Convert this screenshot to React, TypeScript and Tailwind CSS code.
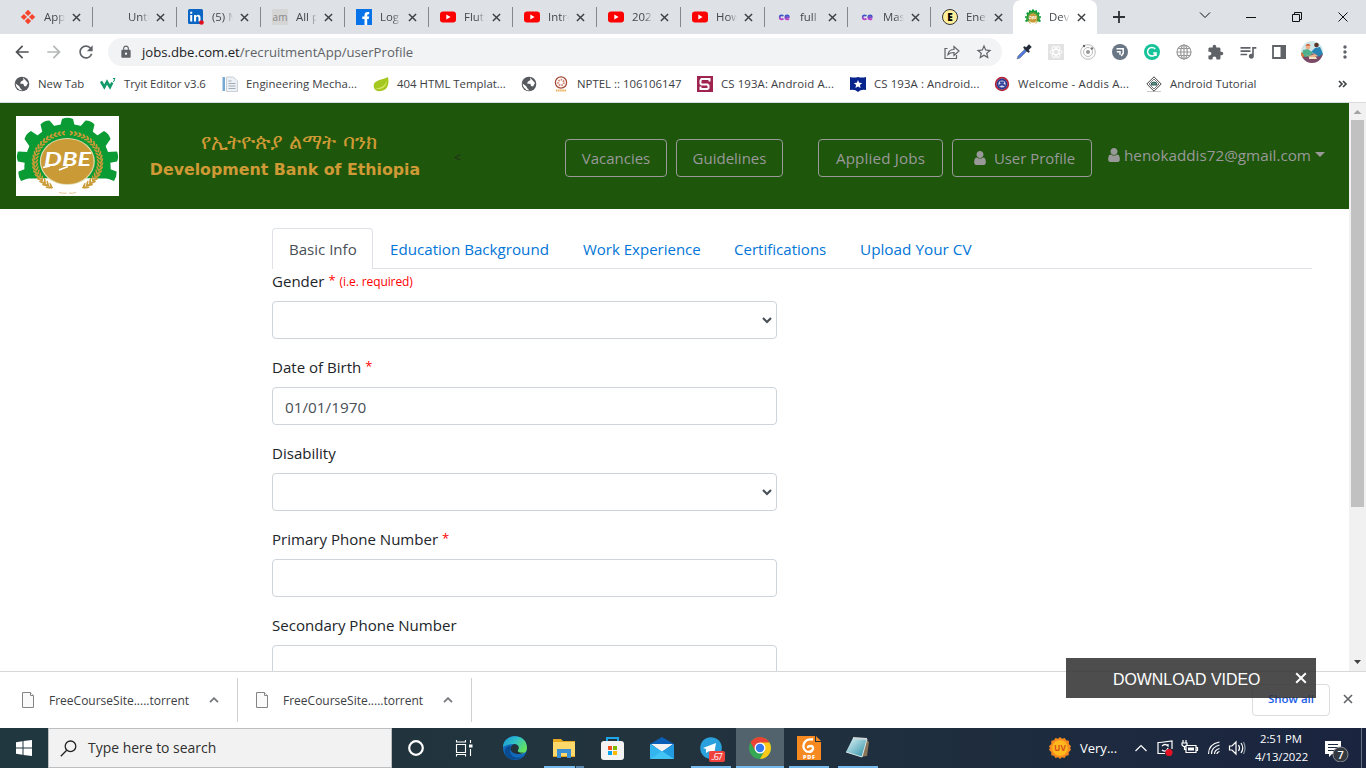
import type { ReactNode } from "react";
import {
  MdArrowBack,
  MdArrowForward,
  MdRefresh,
  MdLock,
  MdStarOutline,
  MdExtension,
  MdQueueMusic,
  MdMoreVert,
} from "react-icons/md";

const LEAVES = Array.from({ length: 20 }, (_, i) => 97 + i * 7.4);

function GearLogo({ className }: { className: string }) {
  return (
    <svg viewBox="0 0 103 80" preserveAspectRatio="none" className={className}>
      <rect width="103" height="80" fill="#fff" />
      <g fill="#0a9b35">
        <path d="M9 62.500C4 28 26 8 51.500 8S99 28 94 62.500Z" />
        <path d="M44 11 46 3Q51.500 .3 57 3L59 11ZM27 19 24.500 8.500Q28 4.500 33.500 4.500L40 12ZM76 19 78.500 8.500Q75 4.500 69.500 4.500L63 12ZM14 31 8.500 23Q10 17.500 15 15L24 21ZM89 31 94.500 23Q93 17.500 88 15L79 21ZM10 47 2 45.500Q-.3 41 2 35.500L12 36ZM93 47 101 45.500Q103.300 41 101 35.500L91 36ZM13 62 5 65Q2 61 2.500 55.500L12 52ZM90 62 98 65Q101 61 100.500 55.500L91 52Z" />
      </g>
      <path d="M20 62.500H83L74 75 51 79 29 75Z" fill="#fff" />
      <g fill="#c99a35">
        {LEAVES.map((deg, i) => {
          const a = (deg * Math.PI) / 180;
          const x = 34 * Math.cos(a);
          const y = 30 * Math.sin(a);
          const size = 2.1 + i * 0.09;
          return (
            <g key={deg}>
              <ellipse cx={51.5 + x} cy={46 - y} rx="1.050" ry={size} transform={`rotate(${150 - deg} ${51.5 + x} ${46 - y})`} />
              <ellipse cx={51.5 + x * 0.91} cy={46 - y * 0.93} rx="0.900" ry={size * 0.8} transform={`rotate(${215 - deg} ${51.5 + x * 0.91} ${46 - y * 0.93})`} />
              <ellipse cx={51.5 - x} cy={46 - y} rx="1.050" ry={size} transform={`rotate(${deg - 150} ${51.5 - x} ${46 - y})`} />
              <ellipse cx={51.5 - x * 0.91} cy={46 - y * 0.93} rx="0.900" ry={size * 0.8} transform={`rotate(${deg - 215} ${51.5 - x * 0.91} ${46 - y * 0.93})`} />
            </g>
          );
        })}
      </g>
      <path d="M43 76.500Q47 77.500 50.500 77.200M53 77.200Q57 77.500 60 76.500" stroke="#d9b877" strokeWidth=".8" fill="none" />
      <ellipse cx="51.300" cy="45.500" rx="27.500" ry="23.600" fill="#e3dcb0" />
      <ellipse cx="51.300" cy="45.500" rx="26.300" ry="22.600" fill="#c99a35" />
      <g fontFamily="Lato, sans-serif" fontStyle="italic" fontWeight="700" fill="#fff">
        <text x="28" y="50" fontSize="19" textLength="47" lengthAdjust="spacingAndGlyphs">DBE</text>
      </g>
      <path d="M27 51.500 34 49.800M43 54 52 50.500" stroke="#fff" strokeWidth="1.800" />
    </svg>
  );
}

function Person({ className }: { className: string }) {
  return (
    <svg viewBox="128 128 1536 1536" className={className} fill="currentColor">
      <path d="M1536 1399q0 109-62.500 187t-150.500 78h-854q-88 0-150.500-78t-62.500-187q0-85 8.500-160.500t31.500-152 58.500-131 94-89 134.500-34.500q131 128 313 128t313-128q76 0 134.500 34.500t94 89 58.500 131 31.500 152 8.500 160.500zm-256-887q0 159-112.500 271.500t-271.500 112.500-271.500-112.500-112.500-271.500 112.500-271.500 271.500-112.500 271.500 112.500 112.500 271.500z" />
    </svg>
  );
}

const Cross = ({ className }: { className: string }) => (
  <svg viewBox="0 0 10 10" className={className} fill="none" stroke="currentColor" strokeWidth="1.600">
    <path d="M1 1l8 8M9 1 1 9" />
  </svg>
);

const YouTube = () => (
  <svg viewBox="0 0 16 16" className="size-4">
    <rect y="2.500" width="16" height="11" rx="3" fill="#f00" />
    <path d="M6.300 5.600v4.800L10.600 8z" fill="#fff" />
  </svg>
);
const CodeCloud = () => (
  <svg viewBox="0 0 16 16" className="size-4" fill="none" strokeWidth="1.700">
    <defs>
      <linearGradient id="cc" x1="0" y1="0" x2="0" y2="1">
        <stop offset="0" stopColor="#3156c8" />
        <stop offset="1" stopColor="#c042c8" />
      </linearGradient>
    </defs>
    <path d="M7.500 6.700Q6.700 6.300 5.500 6.300 3.700 6.300 3.700 8.300T5.500 10.300Q6.700 10.300 7.500 9.700M13 9.900Q12.300 10.300 11.200 10.300 9.300 10.300 9.300 8.300T11.200 6.300Q13 6.300 12.800 8.300H9.500" stroke="url(#cc)" />
  </svg>
);

const Diamonds = () => (
  <svg viewBox="0 0 16 16" className="size-4" fill="#f4442e">
    <path d="M8 .8l3.100 3.100L8 7 4.900 3.900zM3.900 4.900 7 8 3.900 11.100.8 8zM12.100 4.900 15.200 8 12.100 11.100 9 8zM8 9l3.100 3.100L8 15.200 4.900 12.100z" />
  </svg>
);
const LinkedIn = () => (
  <svg viewBox="0 0 16 16" className="size-4">
    <rect width="15" height="15" rx="1.500" fill="#0a66c2" />
    <path d="M2.200 6h2v6.500h-2zM2.200 2.800h2v2h-2zM6 6h1.900v.9C9.500 5 12.500 5.600 12.500 8.700v3.800h-2V9c0-2-2.400-2-2.400 0v3.500H6z" fill="#fff" />
    <circle cx="13.500" cy="13.500" r="2.300" fill="#e01020" />
  </svg>
);
const Facebook = () => (
  <svg viewBox="0 0 16 16" className="size-4">
    <rect width="16" height="16" fill="#0873e8" />
    <path d="M8.500 16v-6H6.300V7.500h2.200V6c0-2.500 1.500-3.300 4.700-2.900v2.200c-1.500 0-2 .1-2 1.200v1h2L12.800 10h-1.600v6z" fill="#fff" />
  </svg>
);

type Tab = { icon: ReactNode; text: string; cls: string };
const TABS: Tab[] = [
  { icon: <Diamonds />, text: "App", cls: "w-[84px] border-r" },
  { icon: null, text: "Unti", cls: "w-[84px] border-r" },
  { icon: <LinkedIn />, text: "(5) M", cls: "w-[84px] border-r" },
  { icon: <span className="flex size-4 items-center justify-center bg-[#d5d5d5] text-[10px] leading-none text-[#888]">am</span>, text: "All p", cls: "w-[84px] border-r" },
  { icon: <Facebook />, text: "Log", cls: "w-[84px] border-r" },
  { icon: <YouTube />, text: "Flut", cls: "w-[84px] border-r" },
  { icon: <YouTube />, text: "Intro", cls: "w-[84px] border-r" },
  { icon: <YouTube />, text: "202", cls: "w-[84px] border-r" },
  { icon: <YouTube />, text: "How", cls: "w-[84px] border-r" },
  { icon: <CodeCloud />, text: "full", cls: "w-[83px] border-r" },
  { icon: <CodeCloud />, text: "Mas", cls: "w-[83px] border-r" },
  { icon: <span className="flex size-4 items-center justify-center rounded-full border border-[#333] bg-[#ffef9a] text-[10px] leading-none font-extrabold text-black">E</span>, text: "Ene", cls: "w-[82px]" },
];

function TabBody({ icon, text }: { icon: ReactNode; text: string }) {
  return (
    <>
      <span className="size-4 shrink-0">{icon}</span>
      <span className="ml-2 w-[21px] whitespace-nowrap [mask-image:linear-gradient(to_right,#000_60%,transparent)]">{text}</span>
      <Cross className="ml-[7px] size-[9px] shrink-0 text-[#3c4043]" />
    </>
  );
}

function TabStrip() {
  return (
    <div className="flex h-[34px] items-center bg-[#dee1e6] pl-[9px] text-[11.400px] text-[#45484c]">
      {TABS.map((t, i) => (
        <div key={i} className={`flex h-5 shrink-0 items-center border-[#84878b] pl-[11px] ${t.cls}`}>
          <TabBody icon={t.icon} text={t.text} />
        </div>
      ))}
      <div className="flex h-[34px] w-[84px] shrink-0 items-center rounded-t-lg bg-white pl-3">
        <TabBody icon={<GearLogo className="size-4" />} text="Dev" />
      </div>
      <svg viewBox="0 0 12 12" className="ml-4 size-3" fill="none" stroke="#303236" strokeWidth="1.800">
        <path d="M6 0v12M0 6h12" />
      </svg>
      <svg viewBox="0 0 150 20" className="mb-[5px] ml-[73px] h-5 w-[150px]" fill="none" stroke="#111">
        <path d="M2 7.500l5 5 5-5M48 12.500h10M94.500 9.500h7v7h-7zM96.500 9.500v-2h7v7h-2M140.500 7.500l9 9M149.500 7.500l-9 9" />
      </svg>
    </div>
  );
}

function Toolbar() {
  return (
    <div className="flex h-9 items-center bg-white text-[#5f6368]">
      <MdArrowBack className="ml-3 size-5 text-[#505357]" />
      <MdArrowForward className="ml-3 size-5 text-[#b4b6b8]" />
      <MdRefresh className="ml-3 size-5" />
      <div className="ml-3 flex h-7 w-[894px] shrink-0 items-center rounded-full bg-[#f1f3f4]">
        <MdLock className="ml-[11px] size-[14px]" />
        <span className="mt-px ml-[9px] text-[13.150px] whitespace-nowrap">
          <span className="text-[#202124]">jobs.dbe.com.et</span>/recruitmentApp/userProfile
        </span>
        <svg viewBox="0 0 16 16" className="ml-auto size-4" fill="none" stroke="currentColor" strokeWidth="1.200">
          <path d="M3.500 4.500H1v10h11.500V11M4 10.500C4.500 7 7 5.500 10 5.500V2.500L15 7l-5 4.500V8.500C7.500 8.500 5.500 9 4 10.500z" />
        </svg>
        <MdStarOutline className="mr-[9px] ml-[15px] size-[18px]" />
      </div>
      <svg viewBox="0 0 16 16" className="ml-[14px] size-4">
        <path d="M1 15 2 12l7-7 2 2-7 7z" fill="#5178dd" stroke="#7d8692" strokeWidth=".8" />
        <path d="m8.500 3.500 4 4M10 5l3-3 1 1-3 3z" stroke="#252b38" strokeWidth="2.400" strokeLinecap="round" fill="#252b38" />
      </svg>
      <svg viewBox="0 0 16 16" className="ml-4 size-4" fill="none" stroke="#fff">
        <rect width="16" height="16" fill="#e2e2e2" stroke="none" />
        <ellipse cx="8" cy="8" rx="6" ry="2.500" />
        <ellipse cx="8" cy="8" rx="6" ry="2.500" transform="rotate(60 8 8)" />
        <ellipse cx="8" cy="8" rx="6" ry="2.500" transform="rotate(120 8 8)" />
      </svg>
      <svg viewBox="0 0 16 16" className="ml-4 size-4" fill="none" stroke="#bdbdbd">
        <circle cx="8" cy="8" r="7.300" />
        <circle cx="8" cy="8" r="4.500" />
        <circle cx="8" cy="8" r="2" fill="#999" stroke="none" />
        <circle cx="4" cy="2" r="1.200" fill="#666" stroke="none" />
        <circle cx="12" cy="4.500" r="1.200" fill="#777" stroke="none" />
      </svg>
      <svg viewBox="0 0 16 16" className="ml-4 size-4" fill="none" stroke="#fff" strokeWidth="1.500">
        <circle cx="8" cy="8" r="8" fill="#687686" stroke="none" />
        <path d="M4.500 4.800h6.700v4.500l-2 2.700M4.800 7.800H8v3" />
      </svg>
      <svg viewBox="0 0 16 16" className="ml-4 size-4" fill="none" stroke="#fff" strokeWidth="1.500">
        <circle cx="8" cy="8" r="8" fill="#15c39a" stroke="none" />
        <path d="M11.200 5A4.300 4.300 0 1 0 12 9H9.200M12 9v3" />
      </svg>
      <svg viewBox="0 0 16 16" className="ml-4 size-4" fill="none" stroke="#999" strokeWidth="1.200">
        <circle cx="8" cy="8" r="7" />
        <ellipse cx="8" cy="8" rx="3.300" ry="7" />
        <path d="M8 1v14M1 8h14M2 4.500h12M2 11.500h12" />
      </svg>
      <MdExtension className="ml-[15px] size-[17px]" />
      <MdQueueMusic className="ml-[14px] size-5" />
      <svg viewBox="0 0 14 14" className="ml-[14px] size-[14px]">
        <path d="M1 1h12v12H1z" fill="none" stroke="currentColor" strokeWidth="1.800" />
        <path d="M8.500 0H14v14H8.500z" fill="currentColor" />
      </svg>
      <svg viewBox="0 0 22 22" className="ml-[15px] size-[22px]">
        <defs>
          <clipPath id="avatar"><circle cx="11" cy="11" r="11" /></clipPath>
        </defs>
        <g clipPath="url(#avatar)">
          <rect width="22" height="22" fill="#cfe6e8" />
          <path d="M0 22V13l4-3 5 3 7-1 6 1v9z" fill="#7c4a66" />
          <path d="M1 14l1-5 5-1 5 4-3 3-5 1z" fill="#4fb08c" />
          <path d="M10 11l4-4 5-1 3 7-5 3-2-3z" fill="#2685b5" />
          <path d="M4 13l4 2 6-2 3 2-7 2z" fill="#e9b58d" />
          <circle cx="7" cy="6" r="2.300" fill="#f0ae88" />
          <circle cx="15.500" cy="4" r="2.300" fill="#5a3428" />
          <path d="M8 16h7l1 2H8z" fill="#f0e4c7" />
          <path d="M4.500 5q2-4 5.500-.5z" fill="#d0653a" />
          <path d="M0 11l3 3-1 3-2 0z" fill="#e4763c" />
        </g>
      </svg>
      <MdMoreVert className="ml-[12px] size-5" />
    </div>
  );
}

const Globe = () => (
  <svg viewBox="0 0 16 16" className="size-4">
    <circle cx="8" cy="8" r="7.300" fill="#56595e" />
    <path d="M9 1.500 9.500 4 7 5.500 6 7.500 9.500 8 10 10l2 .5 2-3.500M1.500 7.500 5 10l1.500 2.500 2 2-3-.5-3-3z" fill="#fff" />
  </svg>
);

const BOOKMARKS: Tab[] = [
  { cls: "w-[86px]", text: "New Tab", icon: <Globe /> },
  {
    cls: "w-[122px] tracking-[-0.07px]", text: "Tryit Editor v3.6",
    icon: (
      <svg viewBox="0 0 16 16" className="size-4" fill="none" stroke="#109a67">
        <path d="M1 5.500l3.300 5.500L7 6l3 5 2.300-4.500" strokeWidth="2.600" />
        <path d="M13 2.500h2l-1 1.500q1.500 1-1 1.500" />
      </svg>
    ),
  },
  {
    cls: "w-[151px] tracking-[0.04px]", text: "Engineering Mecha...",
    icon: (
      <svg viewBox="0 0 16 16" className="size-4">
        <path d="M4.500 1h7l4 4v10.500h-11z" fill="#edf0f4" stroke="#c9d0d8" />
        <path d="M.5 1h2.500v14H.5z" fill="#76a9d4" />
        <path d="M6.500 5h3M6.500 7.500h7M6.500 10h7M6.500 12.500h7" stroke="#9eabb8" />
      </svg>
    ),
  },
  {
    cls: "w-[148px]", text: "404 HTML Templat...",
    icon: (
      <svg viewBox="0 0 16 16" className="size-4">
        <path d="M1 12C-1 4 7 5 15 1c1 5 1 13-7 14-4 .5-6-.5-7-3z" fill="#a5c820" />
        <path d="M1 12c5 1 10-1 13-7-1 7-7 10-13 7z" fill="#d7e765" />
      </svg>
    ),
  },
  { cls: "w-[32px]", text: "", icon: <Globe /> },
  {
    cls: "w-[144px]", text: "NPTEL :: 106106147",
    icon: (
      <svg viewBox="0 0 16 16" className="size-4" fill="none">
        <circle cx="8" cy="6.500" r="5.600" stroke="#a34a36" strokeWidth="1.300" />
        <circle cx="8" cy="6.500" r="2.800" stroke="#d18472" strokeDasharray="1.500 1" strokeWidth="2" />
        <path d="M3 14.500h10" stroke="#edae54" strokeWidth="2" strokeDasharray="1.500 .6" />
      </svg>
    ),
  },
  {
    cls: "w-[153px] tracking-[0.11px]", text: "CS 193A: Android A...",
    icon: (
      <svg viewBox="0 0 16 16" className="size-4" fill="none">
        <rect width="16" height="16" fill="#9e234e" />
        <path d="M12.500 5.500V3h-8l-1 1.500v3l1 1h6l1 1v2.500l-1 1h-7v-2.500" stroke="#fff" strokeWidth="2" />
      </svg>
    ),
  },
  {
    cls: "w-[144px] tracking-[0.1px]", text: "CS 193A : Android...",
    icon: (
      <svg viewBox="0 0 16 16" className="size-4">
        <path d="M0 1q4 1 8 0 4 1 8 0v13q-5-1-8 2-3-3-8-2z" fill="#07258d" />
        <path d="m8 4 1.200 2.800 3 .2-2.300 2 .7 3L8 10.400 5.400 12l.7-3-2.300-2 3-.2z" fill="#fff" />
      </svg>
    ),
  },
  {
    cls: "w-[152px] tracking-[0.2px]", text: "Welcome - Addis A...",
    icon: (
      <svg viewBox="0 0 16 16" className="size-4">
        <circle cx="8" cy="8" r="6.300" fill="#d6d8f2" stroke="#b22438" strokeWidth="1.800" />
        <circle cx="8" cy="8" r="4.500" fill="none" stroke="#28388e" strokeWidth="1.800" />
        <path d="M5 10q3-3 6 0M6 6.500h4" stroke="#34439a" strokeWidth="1.800" fill="none" />
      </svg>
    ),
  },
  {
    cls: "w-[192px]", text: "Android Tutorial",
    icon: (
      <svg viewBox="0 0 16 16" className="size-4" fill="none">
        <path d="M1 15.500h14" stroke="#c9c9c9" />
        <path d="M8 .8 15.200 8 8 15.200.8 8z" stroke="#444" fill="#fff" />
        <path d="M8 3 13 8 8 13 3 8z" stroke="#777" />
        <path d="M5 9a3 3 0 0 1 6 0z" fill="#5b9a72" stroke="#356" />
      </svg>
    ),
  },
];

function Bookmarks() {
  return (
    <div className="flex h-[33px] items-center border-b border-[#dadce0] bg-white pb-[4px] pl-[14px] text-[11.400px] text-[#3c4043]">
      {BOOKMARKS.map((b, i) => (
        <div key={i} className={`flex shrink-0 items-center gap-2 whitespace-nowrap ${b.cls}`}>
          {b.icon}
          <span>{b.text}</span>
        </div>
      ))}
      <svg viewBox="0 0 10 8" className="h-2 w-[10px]" fill="none" stroke="#3c4043" strokeWidth="1.600">
        <path d="M1 1l3 3-3 3M5 1l3 3-3 3" />
      </svg>
    </div>
  );
}

function SiteHeader() {
  return (
    <header className="flex h-[106px] shrink-0 bg-[#1e560c] text-[15.200px] text-[#999]">
      <GearLogo className="mt-[13px] ml-4 h-20 w-[103px]" />
      <div className="mt-[24px] ml-[31px] flex w-[270px] flex-col items-center font-['DejaVu_Sans',sans-serif] whitespace-nowrap text-[#cf9a35]">
        <span className="h-[28px] pl-2 text-[21.300px] leading-[30px]">የኢትዮጵያ ልማት ባንክ</span>
        <span className="h-[28px] text-[15.800px] leading-[30px] font-bold">Development Bank of Ethiopia</span>
      </div>
      <span className="mt-[47px] ml-[34px] w-2 text-[12px] leading-4 text-[#222a1c]">&lt;</span>
      <nav className="mt-9 ml-[103px] flex">
        <a className="flex h-[38px] w-[102px] items-center justify-center rounded border border-[#999] text-[15px]">Vacancies</a>
        <a className="ml-[9px] flex h-[38px] w-[107px] items-center justify-center rounded border border-[#999] text-[15px]">Guidelines</a>
        <a className="ml-[35px] flex h-[38px] w-[125px] items-center justify-center rounded border border-[#999] tracking-[0.15px]">Applied Jobs</a>
        <a className="ml-[9px] flex h-[38px] w-[140px] items-center justify-center rounded border border-[#999] text-[14.900px]">
          <Person className="mr-[7px] ml-1 size-[14px]" />
          User Profile
        </a>
        <a className="ml-[15px] flex h-8 items-center whitespace-nowrap">
          <Person className="size-[14px]" />
          <span className="ml-[3px] w-[187px] text-[15.250px]">henokaddis72@gmail.com</span>
          <svg viewBox="0 0 10 5" className="mb-[2px] ml-1 h-[5px] w-[10px]"><path d="M0 0h10L5 5z" fill="#999" /></svg>
        </a>
      </nav>
    </header>
  );
}

function Field({ label, required, note, value, select }: { label: string; required?: boolean; note?: string; value?: string; select?: boolean }) {
  return (
    <div className="mb-4">
      <label className="mb-2 flex h-6 items-center text-[#212529]">
        {label}
        {required && <span className="ml-1 text-[13px] text-[#f00]">*</span>}
        {note && <span className="mt-px ml-[4px] text-[12px] tracking-[-0.1px] text-[#f00]">{note}</span>}
      </label>
      <div className="flex h-[38px] w-[505px] items-center rounded border border-[#ced4da] pr-1 pl-3 text-[#495057]">
        <span className="pt-[2px] text-[15.300px]">{value}</span>
        {select && (
          <svg viewBox="0 0 10 7" className="ml-auto h-[7px] w-[10px]" fill="none" stroke="#495057" strokeWidth="2.200">
            <path d="M1 1l4 4 4-4" />
          </svg>
        )}
      </div>
    </div>
  );
}

function Page() {
  return (
    <div className="flex h-[568px] overflow-hidden bg-white">
      <div className="flex w-[1349px] shrink-0 flex-col">
        <SiteHeader />
        <main className="mt-[19px] ml-[272px] w-[1040px] text-[15.050px]">
          <div className="flex h-[41px] border-b border-[#dee2e6] leading-[42px] whitespace-nowrap text-[#0275d8]">
            <span className="h-[41px] w-[101px] rounded-t border border-b-0 border-[#dee2e6] bg-white pl-4 leading-[40px] text-[#495057]">Basic Info</span>
            <span className="w-[193px] pl-[17px] text-[15.150px]">Education Background</span>
            <span className="w-[151px] pl-[17px] text-[15px]">Work Experience</span>
            <span className="w-[126px] pl-[17px]">Certifications</span>
            <span className="pl-[17px] text-[15.300px]">Upload Your CV</span>
          </div>
          <Field label="Gender" required note="(i.e. required)" select />
          <Field label="Date of Birth" required value="01/01/1970" />
          <Field label="Disability" select />
          <Field label="Primary Phone Number" required />
          <Field label="Secondary Phone Number" />
        </main>
      </div>
      <div className="flex w-[17px] flex-col items-center bg-[#f1f1f1]">
        <svg viewBox="0 0 17 17" className="size-[17px] shrink-0"><path d="M4.500 11h8l-4-4z" fill="#a3a3a3" /></svg>
        <div className="h-[387px] w-[13px] bg-[#c1c1c1]" />
        <svg viewBox="0 0 17 17" className="mt-auto size-[17px] shrink-0"><path d="M5 6h7l-3.500 4z" fill="#404040" /></svg>
      </div>
    </div>
  );
}

function Download() {
  return (
    <div className="flex h-11 w-[234px] items-center border-r border-[#cfd1d4] pl-[18px]">
      <svg viewBox="0 0 12 16" className="h-4 w-3" fill="#fafafa" stroke="#858585">
        <path d="M.5.500h8l3 3v12H.5z" />
        <path d="M8.500.500v3h3" />
      </svg>
      <span className="mt-px ml-[15px] w-[141px] whitespace-nowrap">FreeCourseSite.....torrent</span>
      <svg viewBox="0 0 10 6" className="ml-[19px] h-[6px] w-[10px]" fill="none" stroke="#74777b" strokeWidth="1.800"><path d="M1 5.200l4-4 4 4" /></svg>
    </div>
  );
}

function DownloadBar() {
  return (
    <div className="flex h-[57px] items-center border-t border-[#d6d8db] bg-white pl-1 text-[12px] text-[#3c4043]">
      <Download />
      <Download />
      <div className="mr-[13px] ml-auto flex h-8 w-[78px] items-center justify-center rounded border border-[#dadce0] pb-[2px] text-[11.500px] font-semibold text-[#1a5fe8]">Show all</div>
      <Cross className="mr-[13px] mb-[2px] size-[10px] text-[#5f6368]" />
    </div>
  );
}

function TaskIcons() {
  return (
    <svg viewBox="392 0 500 40" className="h-10 w-[500px]">
      <defs>
        <linearGradient id="edge" x1="0" y1="0" x2="1" y2="0.6">
          <stop offset="0" stopColor="#1595d8" />
          <stop offset="0.500" stopColor="#30bfc7" />
          <stop offset="1" stopColor="#66e35c" />
        </linearGradient>
        <linearGradient id="note" x1="0" y1="0" x2="1" y2="1">
          <stop offset="0" stopColor="#e5f7f9" />
          <stop offset="1" stopColor="#248ca3" />
        </linearGradient>
      </defs>
      <circle cx="416" cy="20" r="6.800" fill="none" stroke="#fff" strokeWidth="2.200" />
      <g fill="none" stroke="#fff" strokeWidth="1.100">
        <path d="M456.500 16.500h9v8h-9zM456.500 12v2h9v-2M456.500 28.500v-2h9v2M470.500 12v3M470.500 21v7" />
        <path d="M469 16.500h3.500v3H469z" fill="#fff" stroke="none" />
      </g>
      <circle cx="515" cy="20" r="12" fill="#1269bc" />
      <path d="M503 19c0-14 24-15 24 1 0 6-7 7-10 4 2-3 1-8-4-8-4 0-8 2-10 3z" fill="url(#edge)" />
      <path d="M511 18c-4 8 4 15 12 10-6 7-20 3-18-6q1-4 6-4z" fill="#0a4c91" />
      <path d="M514 16c5 0 6 4 3.500 7 2 2 4 2 6 1-2 4-14 2-13-4q1-3 3.500-4z" fill="#23313a" />
      <path d="M553 11h8l2 2h12v16h-22z" fill="#e9a91e" />
      <path d="M553 14h22v14h-22z" fill="#ffd86b" />
      <path d="M557 21h14v9h-4v-5h-6v5h-4z" fill="#3a8fd2" />
      <path d="M607 15v-5h11v5" fill="none" stroke="#20a6e8" strokeWidth="2" />
      <rect x="601" y="13" width="23" height="19" rx="3" fill="#f3f3f3" />
      <path d="M608 18h4v4h-4z" fill="#f25022" /><path d="M613 18h4v4h-4z" fill="#7fba00" />
      <path d="M608 23h4v4h-4z" fill="#00a4ef" /><path d="M613 23h4v4h-4z" fill="#ffb900" />
      <path d="M650 16l12-7 12 7v15h-24z" fill="#0b5fb6" />
      <path d="M651 16h22l-11 8z" fill="#f3f3f3" />
      <path d="M650 16l24 15h-24z" fill="#33b6f0" /><path d="M674 16v15h-24z" fill="#229be0" /><path d="M650 31l12-8 12 8z" fill="#42c4f6" />
      <circle cx="711" cy="20" r="10.800" fill="#2aa1dc" />
      <path d="M703 20l13-5-2 12-5-4-3 2v-4z" fill="#fff" />
      <rect x="709" y="23" width="16" height="11" rx="2" fill="#f0413c" />
      <text x="711" y="32" fontSize="9" fill="#fff" fontFamily="Open Sans, sans-serif" textLength="12">..67</text>
      <path d="M736 0h48v40h-48z" fill="#52636d" />
      <circle cx="760" cy="20" r="11" fill="#34a853" />
      <path d="M760 20 750.500 14.500A11 11 0 0 1 769.500 14.500z" fill="#ea4335" />
      <path d="M760 14.500h9.500A11 11 0 0 1 760 31l5-9z" fill="#fbc91a" />
      <path d="M750.500 14.500 755.500 23 760 14.500z" fill="#ea4335" />
      <circle cx="760" cy="20" r="5.500" fill="#fff" /><circle cx="760" cy="20" r="4.200" fill="#3378ed" />
      <path d="M797 8h18v6h6v18h-24z" fill="#f6891f" /><path d="M816 8l5 5h-5z" fill="#f6891f" />
      <path d="M813 11.500q-7-1-9 4t2.500 8q5 1.500 6.500-2.500 .5-3-2.500-3t-2.500 2" fill="none" stroke="#fff" strokeWidth="2.300" />
      <text x="803" y="31" fontSize="5.500" fontWeight="800" fill="#fff" fontFamily="Open Sans, sans-serif" textLength="12">PDF</text>
      <path d="M866 11l3 3-2 14-7 1z" fill="#8a7558" />
      <path d="M853 10l14 1-5 18-16-5z" fill="url(#note)" />
      <path d="M846 24l16 5 5-18" fill="none" stroke="#dae8e8" />
      <path d="M853 10l14 1" stroke="#cfd6d7" strokeWidth="2" />
      <g fill="#76b9ed">
        <path d="M544 38h31v2h-31zM691 38h40v2h-40zM736 38h48v2h-48zM789 38h40v2h-40zM838 38h40v2h-40z" />
        <path d="M576 38h8v2h-8z" fill="#5686ad" />
      </g>
    </svg>
  );
}

function Taskbar() {
  return (
    <div className="flex h-10 items-center bg-linear-to-r from-[#21373f] via-[#22333e] to-[#1a243f] text-white">
      <svg viewBox="0 0 16 16" className="mx-4 size-4" fill="#fff">
        <path d="M0 2.200 6.500 1.300V7.500H0zM7.500 1.100 16 0v7.500H7.500zM0 8.500h6.500v6.200L0 13.800zM7.500 8.500H16V16L7.500 14.900z" />
      </svg>
      <div className="flex h-10 w-[344px] items-center border border-[#bcbfc1] bg-[#f2f2f2] pl-[11px] text-[13.950px] text-[#303030]">
        <svg viewBox="0 0 17 17" className="size-[17px]" fill="none" stroke="#222" strokeWidth="1.300">
          <circle cx="10.500" cy="6.300" r="5.300" /><path d="M6.700 10.300.8 16.200" />
        </svg>
        <span className="ml-[11px]">Type here to search</span>
      </div>
      <TaskIcons />
      <svg viewBox="0 0 24 24" className="ml-[157px] size-[22px]">
        <path d="m12 0 2.200 2 3-1 1.500 2.500 3 .5v3.500L24 10l-1 2 1 2-2.500 2.500V20l-3 .5L17 23l-3-1-2 2-2-2-3 1-1.500-2.500-3-.5v-3.500L0 14l1-2-1-2 2.500-2.500V4l3-.5L7 1l3 1z" fill="#f58b1f" />
        <circle cx="12" cy="12" r="8.500" fill="#ffb91c" />
        <text x="5.500" y="15.500" fontSize="10" fontWeight="700" fill="#d7501e" fontFamily="Open Sans, sans-serif" textLength="13" lengthAdjust="spacingAndGlyphs">UV</text>
      </svg>
      <span className="mt-px ml-[9px] w-[38px] text-[13px] whitespace-nowrap">Very...</span>
      <svg viewBox="1134 0 112 40" className="ml-[16px] h-10 w-[112px]" fill="none" stroke="#fff" strokeWidth="1.200">
        <path d="M1135.500 23l5.500-5.500 5.500 5.500" />
        <path d="M1160 14.500h-2v11h7M1160 14.500l12-1.500v8M1162 18q3-3 6 0v-2M1168 20q-2 5-6 2" />
        <circle cx="1169" cy="24.500" r="3.500" fill="#e81123" stroke="none" />
        <path d="M1186 17.500h10v7h-10zM1196 19.500h1.500v3h-1.500M1183 12v3M1186 12v3M1182 15h5v2l-1.500 1.500h-2L1182 17zM1184.500 19v2.500h2" />
        <path d="M1188 19.500h6v3h-6z" fill="#fff" stroke="none" />
        <path d="M1208.500 26q0-10 11-12M1211.500 26q0-7 8-9M1214.500 26q0-4 5-5.500M1217 26q0-2 2.500-2.500" />
        <path d="M1229.500 18h2.500l4-4v12l-4-4h-2.500zM1238.500 17q2 3 0 6M1241 15q3.500 5 0 10" />
        <path d="M1243.500 14q3 6 0 12" stroke="#8a949f" />
      </svg>
      <div className="ml-[9px] w-[52px] text-center text-[11.300px] leading-[18px] tracking-[-0.05px] whitespace-nowrap">
        <div>2:51 PM</div>
        <div>4/13/2022</div>
      </div>
      <svg viewBox="0 0 26 26" className="mt-px ml-[17px] size-[26px]">
        <path d="M1 5h16v13H8l-3 3v-3H1z" fill="#fff" />
        <path d="M4 8.500h10M4 11.500h10M4 14.500h7" stroke="#1b2840" />
        <circle cx="16.500" cy="18.500" r="7.500" fill="#34393f" stroke="#8b8f94" />
        <text x="13.500" y="22.500" fontSize="11" fontWeight="600" fill="#fff" fontFamily="Open Sans, sans-serif">7</text>
      </svg>
      <div className="ml-auto h-10 w-[5px] border-l border-[#667080]" />
    </div>
  );
}

export default function App() {
  return (
    <div className="relative h-[768px] w-[1366px] overflow-hidden bg-white font-['Open_Sans',sans-serif]">
      <TabStrip />
      <Toolbar />
      <Bookmarks />
      <Page />
      <DownloadBar />
      <Taskbar />
      <div className="absolute top-[658px] left-[1066px] flex h-10 w-[250px] items-center bg-[#323232]/87 pt-[3px] pl-[47px] font-['Liberation_Sans',sans-serif] text-[15.900px] text-white">
        <span className="whitespace-nowrap">DOWNLOAD VIDEO</span>
        <Cross className="mr-[9px] mb-[3px] ml-auto size-3" />
      </div>
    </div>
  );
}
